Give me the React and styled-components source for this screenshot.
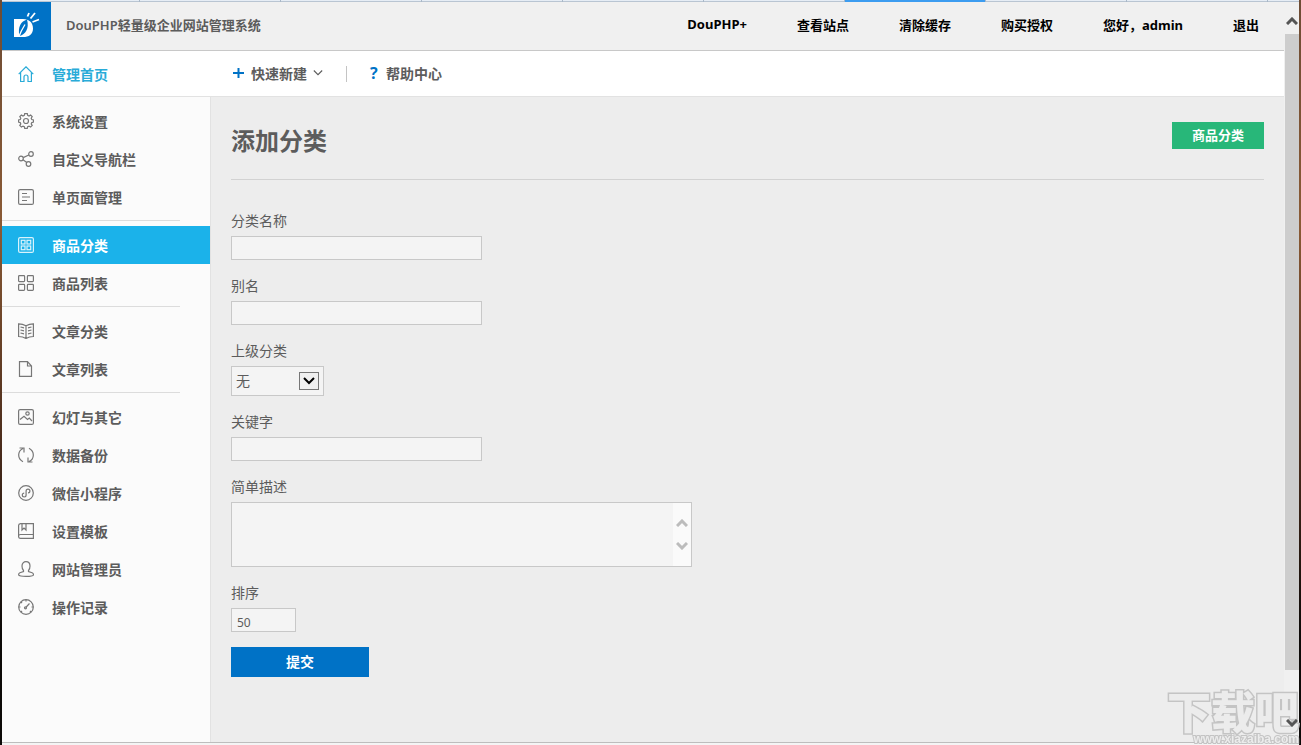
import React from 'react'
import styled, { createGlobalStyle } from 'styled-components'

const GlobalStyle = createGlobalStyle`
  * {
    box-sizing: border-box;
  }
  body {
    margin: 0;
    font-family: "Noto Sans", "Noto Sans CJK SC", sans-serif;
    font-size: 14px;
    color: #5c5c5c;
  }
  a {
    color: inherit;
    text-decoration: none;
  }
  button, input, select, textarea {
    font-family: inherit;
    color: inherit;
  }
`

/* browser window */

const Desktop = styled.div`
  display: flex;
  flex-direction: column;
  min-height: 100vh;
  padding: 0 2px;
  background: linear-gradient(#6d4c35, #8a5a35 30%, #4a2c1c 60%, #0d0a08 85%);
`
const TabStrip = styled.div`
  display: flex;
  height: 2px;
  background: #e6edf5;
  border-bottom: 1px solid #b9c5d2;
`
const Tab = styled.span`
  flex: 0 0 141px;
  height: 2px;
  border-right: 1px solid #a9b8c8;
  background: ${({ $active }) => ($active ? '#3c9cf0' : 'transparent')};
  &:first-child {
    flex-basis: 138px;
  }
`
const Viewport = styled.div`
  display: flex;
  flex: 1;
  background: #ededed;
`
const Page = styled.div`
  display: flex;
  flex-direction: column;
  flex: 1;
  min-width: 0;
`
const Scrollbar = styled.div`
  display: flex;
  flex-direction: column;
  align-items: center;
  flex: 0 0 15px;
  padding: 15px 0;
  background: #f0f0f0;
  color: #555;
  svg {
    position: relative;
    z-index: 1;
  }
`
const Thumb = styled.div`
  flex: 1;
  width: 14px;
  margin: 9px 0 49px;
  background: #cdcdcd;
`
const StatusLine = styled.div`
  height: 3px;
  border-top: 1px solid #bdbdbd;
  background: #f4f4f4;
`

/* header */

const Header = styled.header`
  display: flex;
  align-items: center;
  height: 49px;
  background: #f0f0f0;
  border-bottom: 1px solid #c8c8c8;
`
const Logo = styled.a`
  display: flex;
  width: 49px;
  height: 48px;
  background: #0072c6;
`
const SystemName = styled.div`
  margin-left: 15px;
  padding-bottom: 4px;
  font-size: 13px;
  font-weight: 600;
`
const TopNav = styled.nav`
  display: flex;
  margin-left: auto;
  padding-bottom: 4px;
  font-size: 13px;
  font-weight: bold;
  color: #000;
  a {
    padding: 0 25px;
  }
`

const ToolRow = styled.div`
  display: flex;
  align-items: center;
  height: 46px;
  background: #fff;
  border-bottom: 1px solid #e2e2e2;
`
const HomeLink = styled.a`
  display: flex;
  align-items: center;
  gap: 18px;
  width: 229px;
  padding-left: 16px;
  font-weight: 600;
  color: #29abd8;
`
const QuickLink = styled.a`
  display: flex;
  align-items: center;
  gap: 6px;
  padding-bottom: 2px;
  font-weight: 600;
`
const Separator = styled.span`
  width: 1px;
  height: 16px;
  margin: 0 23px;
  background: #c4c4c4;
`
const Question = styled.span`
  width: 10px;
  font-size: 16px;
  font-weight: bold;
  line-height: 20px;
  color: #0072c6;
`

/* sidebar */

const Body = styled.div`
  display: flex;
  flex: 1;
`
const Sidebar = styled.aside`
  flex: 0 0 209px;
  background: #fbfbfb;
  border-right: 1px solid #e2e2e2;
`
const MenuGroup = styled.ul`
  margin: 0;
  padding: 5px 0 4px;
  list-style: none;
  & + &::before {
    content: "";
    display: block;
    width: 178px;
    height: 1px;
    margin: -5px 0 5px;
    background: #dcdcdc;
  }
`
const MenuLink = styled.a`
  display: flex;
  align-items: center;
  gap: 18px;
  height: 38px;
  padding-left: 16px;
  font-weight: 600;
  color: ${({ $active }) => ($active ? '#fff' : '#5c5c5c')};
  background: ${({ $active }) => ($active ? '#1bb2ea' : 'transparent')};
  svg {
    color: ${({ $active }) => ($active ? '#d9f3fc' : '#777')};
  }
`

/* content */

const Main = styled.main`
  flex: 1;
  padding: 25px 20px 20px;
  background: #ededed;
`
const TitleRow = styled.div`
  display: flex;
  align-items: flex-start;
  justify-content: space-between;
  height: 58px;
  border-bottom: 1px solid #d2d2d2;
`
const Title = styled.h1`
  margin: 0;
  font-size: 24px;
  line-height: 38px;
`
const GreenButton = styled.a`
  padding: 0 20px;
  font-size: 13px;
  font-weight: 600;
  line-height: 27px;
  color: #fff;
  background: #28b779;
`
const Form = styled.form`
  display: flex;
  flex-direction: column;
  align-items: flex-start;
  padding-top: 31px;
`
const Field = styled.div`
  display: flex;
  flex-direction: column;
  gap: 5px;
  margin-bottom: 16px;
  label {
    line-height: 20px;
  }
`
const TextInput = styled.input`
  width: ${({ $short }) => ($short ? '65px' : '251px')};
  height: 24px;
  padding: 4px 5px 0;
  font-size: 12px;
  background: #f4f4f4;
  border: 1px solid #c8c8c8;
  border-radius: 0;
`
const SelectBox = styled.div`
  position: relative;
  width: 93px;
`
const Select = styled.select`
  display: block;
  appearance: none;
  width: 100%;
  height: 30px;
  padding: 0 4px 2px;
  font-size: 14px;
  background: #f4f4f4;
  border: 1px solid #c8c8c8;
  border-radius: 0;
`
const SelectArrow = styled.span`
  position: absolute;
  top: 6px;
  right: 5px;
  display: flex;
  align-items: center;
  justify-content: center;
  width: 20px;
  height: 18px;
  background: #f0f0f0;
  border: 1px solid #777;
  color: #000;
  pointer-events: none;
`
const AreaBox = styled.div`
  display: flex;
  width: 461px;
  height: 65px;
  border: 1px solid #c8c8c8;
  background: #f4f4f4;
`
const Area = styled.textarea`
  flex: 1;
  padding: 5px;
  font-size: 12px;
  background: transparent;
  border: 0;
  resize: none;
`
const AreaScroll = styled.div`
  display: flex;
  flex-direction: column;
  align-items: center;
  justify-content: center;
  gap: 15px;
  width: 18px;
  background: #fafafa;
  color: #bcbcbc;
`
const Submit = styled.button`
  width: 138px;
  height: 30px;
  margin-top: -1px;
  padding: 0 0 2px;
  font-size: 14px;
  font-weight: bold;
  color: #fff;
  background: #0072c6;
  border: 0;
`

/* stamp lying over the window corner */

const Stamp = styled.div`
  position: fixed;
  right: 2px;
  bottom: 0;
  display: flex;
  flex-direction: column;
  align-items: flex-end;
  font-weight: 900;
  color: #ececec;
  paint-order: stroke fill;
  pointer-events: none;
`
const StampName = styled.span`
  font-family: "Noto Sans CJK SC", sans-serif;
  font-size: 44px;
  line-height: 46px;
  -webkit-text-stroke: 3px #c4c4c4;
`
const StampUrl = styled.span`
  font-family: "Liberation Sans", sans-serif;
  font-size: 12px;
  line-height: 12px;
  -webkit-text-stroke: 2px #c4c4c4;
`

const icons = {
  home: (
    <path d="M.7 8.2 8 .8l7.300 7.400M2.600 6.500v9H6v-4.500a2 2 0 0 1 4 0v4.500h3.400v-9" />
  ),
  gear: (
    <>
      <circle cx="8" cy="8" r="2.500" />
      <path d="M6.700.6h2.600l.4 1.800 1.300.6 1.600-1 1.600 1.600-1 1.600.6 1.300 1.700.4v2.200l-1.700.5-.6 1.300 1 1.600-1.600 1.600-1.600-1-1.300.6-.4 1.700H6.700l-.4-1.700-1.300-.6-1.600 1-1.600-1.600 1-1.600-.6-1.300-1.700-.5V6.900l1.700-.4.6-1.300-1-1.600L3.400 2l1.600 1 1.300-.6z" />
    </>
  ),
  share: (
    <>
      <circle cx="3" cy="7.500" r="2.300" />
      <circle cx="13" cy="3" r="2.300" />
      <circle cx="10.500" cy="13" r="2.300" />
      <path d="m5.200 6.600 5.600-2.600M5 8.800l3.800 2.700" />
    </>
  ),
  page: (
    <>
      <rect x=".6" y=".6" width="14.800" height="14.800" rx="1.500" />
      <path d="M4 4.500h5M4 8h8M4 11.500h5" />
    </>
  ),
  category: (
    <>
      <rect x=".6" y=".6" width="14.800" height="14.800" rx="1.500" />
      <rect x="3.300" y="3.300" width="3.700" height="3.700" />
      <rect x="9" y="3.300" width="3.700" height="3.700" />
      <rect x="3.300" y="9" width="3.700" height="3.700" />
      <rect x="9" y="9" width="3.700" height="3.700" />
    </>
  ),
  grid: (
    <>
      <rect x=".6" y=".6" width="6" height="6" rx=".8" />
      <rect x="9.400" y=".6" width="6" height="6" rx=".8" />
      <rect x=".6" y="9.400" width="6" height="6" rx=".8" />
      <rect x="9.400" y="9.400" width="6" height="6" rx=".8" />
    </>
  ),
  book: (
    <path d="M8 2.700C5.500 1.300 3 .8.600.8v12.700c2.400 0 4.900.4 7.400 1.900 2.500-1.500 5-1.900 7.400-1.900V.8C13 .8 10.500 1.300 8 2.700v12.700M2.500 4l3.500.9M2.500 7l3.500.9M2.500 10l3.500.9M13.500 4l-3.500.9M13.500 7l-3.500.9M13.500 10l-3.500.9" />
  ),
  file: (
    <path d="M1.500.6h8l4 4.400v10.400h-12zM9.500.6V5h4" />
  ),
  image: (
    <>
      <rect x=".6" y=".6" width="14.800" height="14.800" rx="1.500" />
      <circle cx="9.500" cy="4.500" r="1.700" />
      <path d="m2 10.500 4-3.300 3.500 3.300 1.800-1.500 2.700 3" />
    </>
  ),
  sync: (
    <path d="M6 5.500V1H1.500M5 1.500C-.5 4-1 11.500 5 14.800M10 10.500V15h4.500M11 14.500C16.500 12 17 4.500 11 1.200" />
  ),
  mini: (
    <>
      <circle cx="8" cy="8" r="7.300" />
      <path d="M6.200 8.200a1.900 1.900 0 1 0 1.900 1.900V6a1.900 1.900 0 1 1 1.900 1.900" />
    </>
  ),
  template: (
    <>
      <path d="M15.400 11.500v3.900H2.500a1.900 1.900 0 0 1 0-3.900h12.900V.6H2.500a2 2 0 0 0-1.900 2v11" />
      <path d="M4 .6V7l2-2 2 2V.6" />
    </>
  ),
  user: (
    <path d="M5.500 9.500C4.300 8.300 4 6.500 4 5c0-2.700 1.700-4.400 4-4.400S12 2.300 12 5c0 1.500-.3 3.300-1.500 4.500v1l3.600 1.200c1 .4 1.400 1 1.400 2 0 1.200-3.500 1.700-7.500 1.700S.6 14.900.6 13.700c0-1 .4-1.600 1.300-2l3.600-1.200z" />
  ),
  gauge: (
    <>
      <circle cx="8" cy="8" r="7.300" />
      <circle cx="7.500" cy="8.800" r="1" />
      <path d="m8.200 8 3.300-3.500M8 .8v1.700M.8 8h1.700M13.500 8h1.700M3 3l1 1M13 13l-1-1M3 13l1-1" />
    </>
  ),
}

const Icon = ({ name }) => (
  <svg width="16" height="16" viewBox="0 0 16 16" fill="none" stroke="currentColor" strokeWidth="1.200" aria-hidden="true">
    {icons[name]}
  </svg>
)

const Chevron = ({ up, size = 10, weight = 2 }) => (
  <svg width={size} height="8" viewBox="0 0 12 8" fill="none" stroke="currentColor" strokeWidth={weight} aria-hidden="true">
    <path d={up ? 'M1 7l5-5 5 5' : 'M1 1l5 5 5-5'} />
  </svg>
)

const LogoMark = () => (
  <svg width="49" height="48" viewBox="0 0 49 48" aria-hidden="true">
    <path
      fill="#fff"
      fillRule="evenodd"
      d="M12 17h9c6 0 10 3.500 10 9.500S27 35 21 35h-9zM25 17.500c-6 2-9.500 7-7.500 16.500 6-1.500 10-7.500 7.500-16.500z"
    />
    <path d="M17 34.500c1.500-4.500 3.500-8 6-12" fill="none" stroke="#fff" strokeWidth="1.300" />
    <path d="m25.500 14.500 1.500-3.500M28.500 16.500l4.500-5.500M30.500 20l6.500-2.500" fill="none" stroke="#fff" strokeWidth="1.800" />
  </svg>
)

const menu = [
  [
    ['gear', '系统设置'],
    ['share', '自定义导航栏'],
    ['page', '单页面管理'],
  ],
  [
    ['category', '商品分类'],
    ['grid', '商品列表'],
  ],
  [
    ['book', '文章分类'],
    ['file', '文章列表'],
  ],
  [
    ['image', '幻灯与其它'],
    ['sync', '数据备份'],
    ['mini', '微信小程序'],
    ['template', '设置模板'],
    ['user', '网站管理员'],
    ['gauge', '操作记录'],
  ],
]

const topLinks = ['DouPHP+', '查看站点', '清除缓存', '购买授权', '您好，admin', '退出']

export default function App() {
  return (
    <Desktop>
      <GlobalStyle />
      <TabStrip>
        {[0, 1, 2, 3, 4, 5, 6, 7, 8].map(i => (
          <Tab key={i} $active={i === 6} />
        ))}
      </TabStrip>
      <Viewport>
        <Page>
          <Header>
            <Logo href="#" aria-label="DouPHP"><LogoMark /></Logo>
            <SystemName>DouPHP轻量级企业网站管理系统</SystemName>
            <TopNav>
              {topLinks.map(text => <a href="#" key={text}>{text}</a>)}
            </TopNav>
          </Header>
          <ToolRow>
            <HomeLink href="#"><Icon name="home" />管理首页</HomeLink>
            <QuickLink href="#">
              <svg width="14" height="12" viewBox="0 0 14 12" stroke="#0072c6" strokeWidth="2" aria-hidden="true">
                <path d="M2 6h11M7.500 1v10" />
              </svg>
              快速新建
              <Chevron weight="1.300" />
            </QuickLink>
            <Separator />
            <QuickLink href="#"><Question>?</Question>帮助中心</QuickLink>
          </ToolRow>
          <Body>
            <Sidebar>
              {menu.map((group, i) => (
                <MenuGroup key={i}>
                  {group.map(([icon, text]) => (
                    <li key={text}>
                      <MenuLink href="#" $active={text === '商品分类'}>
                        <Icon name={icon} />
                        {text}
                      </MenuLink>
                    </li>
                  ))}
                </MenuGroup>
              ))}
            </Sidebar>
            <Main>
              <TitleRow>
                <Title>添加分类</Title>
                <GreenButton href="#">商品分类</GreenButton>
              </TitleRow>
              <Form onSubmit={e => e.preventDefault()}>
                <Field>
                  <label htmlFor="cat_name">分类名称</label>
                  <TextInput id="cat_name" type="text" />
                </Field>
                <Field>
                  <label htmlFor="unique_id">别名</label>
                  <TextInput id="unique_id" type="text" />
                </Field>
                <Field>
                  <label htmlFor="parent_id">上级分类</label>
                  <SelectBox>
                    <Select id="parent_id">
                      <option>无</option>
                    </Select>
                    <SelectArrow><Chevron size={12} /></SelectArrow>
                  </SelectBox>
                </Field>
                <Field>
                  <label htmlFor="keywords">关键字</label>
                  <TextInput id="keywords" type="text" />
                </Field>
                <Field>
                  <label htmlFor="description">简单描述</label>
                  <AreaBox>
                    <Area id="description" />
                    <AreaScroll>
                      <Chevron up size={12} weight={3} />
                      <Chevron size={12} weight={3} />
                    </AreaScroll>
                  </AreaBox>
                </Field>
                <Field>
                  <label htmlFor="sort">排序</label>
                  <TextInput id="sort" type="text" defaultValue="50" $short />
                </Field>
                <Submit type="submit">提交</Submit>
              </Form>
            </Main>
          </Body>
        </Page>
        <Scrollbar>
          <Chevron up size={12} weight={3} />
          <Thumb />
          <Chevron size={12} weight={3} />
        </Scrollbar>
      </Viewport>
      <StatusLine />
      <Stamp>
        <StampName>下载吧</StampName>
        <StampUrl>www.xiazaiba.com</StampUrl>
      </Stamp>
    </Desktop>
  )
}
